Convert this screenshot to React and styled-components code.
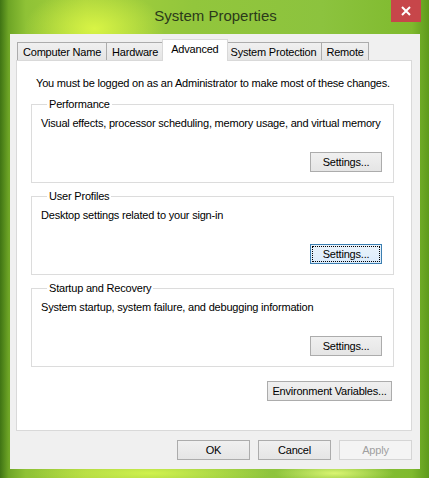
import React from 'react';
import styled, { createGlobalStyle, css } from 'styled-components';

const GlobalStyle = createGlobalStyle`
  html, body {
    margin: 0;
    padding: 0;
  }
  body {
    font-family: "Segoe UI", "Liberation Sans", Arial, sans-serif;
    font-size: 11px;
    letter-spacing: -0.2px;
    color: #000;
  }
`;

const Window = styled.div`
  width: 429px;
  height: 478px;
  box-sizing: border-box;
  padding: 0 9px 9px 10px;
  display: flex;
  flex-direction: column;
  background:
    radial-gradient(ellipse 70px 40px at 22% 6%, rgba(222, 248, 70, 0.9), transparent),
    radial-gradient(ellipse 120px 14px at 35% 99%, rgba(214, 246, 80, 0.9), transparent),
    radial-gradient(ellipse 60px 10px at 78% 99%, rgba(226, 250, 120, 0.9), transparent),
    linear-gradient(90deg, #3f7414 0%, #6ea526 2%, #8fc236 6%, #a6d03c 20%, #92c63c 45%, #8cc33e 75%, #7fba2e 96%, #5e9a1c 100%);
`;

const TitleBar = styled.div`
  height: 35px;
  display: grid;
  grid-template-columns: 1fr auto 1fr;
  align-items: start;
  margin-right: -1px;
`;

const Title = styled.div`
  grid-column: 2;
  padding-top: 7px;
  font-size: 15px;
  letter-spacing: 0;
  color: #2b3a1a;
`;

const CloseButton = styled.div`
  grid-column: 3;
  justify-self: end;
  width: 30px;
  height: 22px;
  background: #c7464a;
  display: flex;
  align-items: center;
  justify-content: center;
`;

const Client = styled.div`
  flex: 1;
  background: #f0f0f0;
  padding: 5px 8px 9px 6px;
  display: flex;
  flex-direction: column;
`;

const Tabs = styled.div`
  display: flex;
  align-items: flex-end;
  padding-left: 1px;
  height: 21px;
  position: relative;
  z-index: 1;
`;

const Tab = styled.div`
  height: 18px;
  box-sizing: border-box;
  padding: 0 ${(p) => p.$pad || 5}px;
  border: 1px solid #acacac;
  border-bottom: none;
  margin-left: -1px;
  background: linear-gradient(#f0f0f0, #e5e5e5);
  display: flex;
  align-items: center;
  white-space: nowrap;
  &:first-child {
    margin-left: 0;
  }
  ${(p) =>
    p.$active &&
    css`
      height: 22px;
      margin: 0 -2px -1px -2px;
      padding-bottom: 3px;
      background: #fff;
      border-color: #d9d9d9;
      position: relative;
      z-index: 2;
    `}
`;

const Panel = styled.div`
  height: 371px;
  box-sizing: border-box;
  background: #fff;
  border: 1px solid #d9d9d9;
  padding: 13px 17px 0 14px;
  display: flex;
  flex-direction: column;
`;

const Notice = styled.div`
  padding-left: 5px;
  height: 18px;
  line-height: 18px;
  margin-bottom: 5px;
  white-space: nowrap;
`;

const Group = styled.fieldset`
  margin: 0 0 6px 0;
  padding: 0 11px 11px 9px;
  height: 86px;
  min-width: 0;
  box-sizing: border-box;
  border: 1px solid #dcdcdc;
`;

const Legend = styled.legend`
  margin-left: 6px;
  padding: 0 2px;
  line-height: 14px;
`;

const Description = styled.div`
  height: 41px;
  box-sizing: border-box;
  padding-top: 6px;
  white-space: nowrap;
`;

const ButtonRow = styled.div`
  display: flex;
  justify-content: flex-end;
  gap: 8px;
  ${(p) =>
    p.$footer &&
    css`
      margin-top: 9px;
    `}
`;

const Button = styled.div`
  box-sizing: border-box;
  height: 20px;
  width: ${(p) => p.$width || 72}px;
  border: 1px solid #acacac;
  background: linear-gradient(#f0f0f0, #e5e5e5);
  display: flex;
  align-items: center;
  justify-content: center;
  white-space: nowrap;
  ${(p) =>
    p.$focused &&
    css`
      border-color: #3c7fb1;
      background: linear-gradient(#eaf3fb, #dcecfc);
      outline: 1px dotted #000;
      outline-offset: -3px;
    `}
  ${(p) =>
    p.$disabled &&
    css`
      color: #a0a0a0;
      border-color: #d5d5d5;
      background: #f4f4f4;
    `}
`;

const EnvRow = styled.div`
  display: flex;
  justify-content: flex-end;
  padding-right: 2px;
  margin-top: 8px;
`;

const groups = [
  { title: 'Performance', text: 'Visual effects, processor scheduling, memory usage, and virtual memory' },
  { title: 'User Profiles', text: 'Desktop settings related to your sign-in', focused: true },
  { title: 'Startup and Recovery', text: 'System startup, system failure, and debugging information' },
];

const tabs = [
  { label: 'Computer Name', pad: 5 },
  { label: 'Hardware', pad: 5 },
  { label: 'Advanced', pad: 8, active: true },
  { label: 'System Protection', pad: 5 },
  { label: 'Remote', pad: 4 },
];

export default function App() {
  return (
    <>
      <GlobalStyle />
      <Window>
        <TitleBar>
          <Title>System Properties</Title>
          <CloseButton>
            <svg width="10" height="10" viewBox="0 0 10 10">
              <path d="M1 1 L9 9 M9 1 L1 9" stroke="#fff" strokeWidth="2" />
            </svg>
          </CloseButton>
        </TitleBar>
        <Client>
          <Tabs>
            {tabs.map((t) => (
              <Tab key={t.label} $active={t.active} $pad={t.pad}>
                {t.label}
              </Tab>
            ))}
          </Tabs>
          <Panel>
            <Notice>You must be logged on as an Administrator to make most of these changes.</Notice>
            {groups.map((g) => (
              <Group key={g.title}>
                <Legend>{g.title}</Legend>
                <Description>{g.text}</Description>
                <ButtonRow>
                  <Button $focused={g.focused}>Settings...</Button>
                </ButtonRow>
              </Group>
            ))}
            <EnvRow>
              <Button $width={125}>Environment Variables...</Button>
            </EnvRow>
          </Panel>
          <ButtonRow $footer>
            <Button $width={73}>OK</Button>
            <Button $width={73}>Cancel</Button>
            <Button $width={73} $disabled>
              Apply
            </Button>
          </ButtonRow>
        </Client>
      </Window>
    </>
  );
}
